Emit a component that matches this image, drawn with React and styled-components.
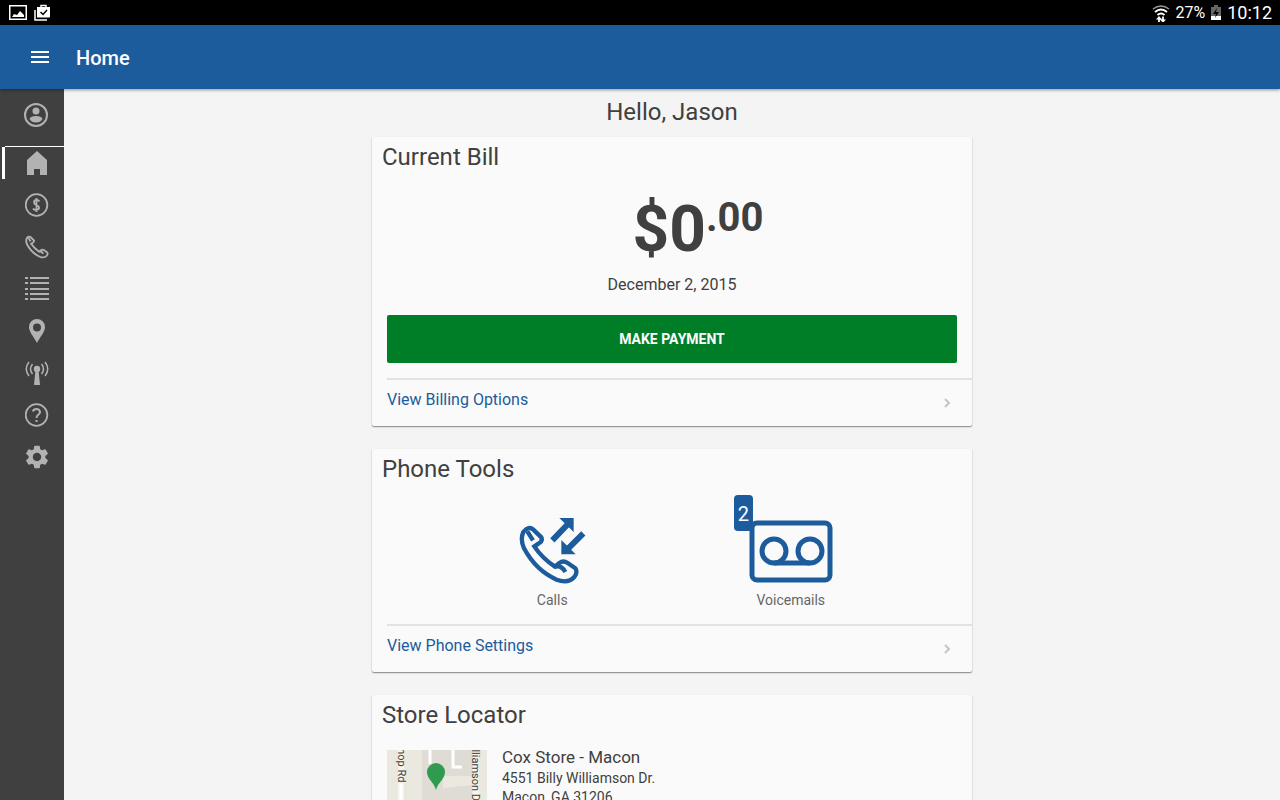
import React from "react";
import styled, { createGlobalStyle } from "styled-components";
import { MdSettings } from "react-icons/md";

const GlobalStyle = createGlobalStyle`
  * {
    box-sizing: border-box;
  }
  body {
    margin: 0;
    font-family: Roboto, sans-serif;
    color: #404040;
    background: #f4f4f4;
  }
`;

const Shell = styled.div`
  display: flex;
  flex-direction: column;
  height: 100vh;
`;

const StatusBar = styled.div`
  display: flex;
  flex: none;
  align-items: center;
  gap: 6px;
  height: 25px;
  padding: 0 8px;
  background: #000;
  color: #fff;
`;

const StatusRight = styled.div`
  display: flex;
  align-items: center;
  gap: 5px;
  margin-left: auto;
  font-size: 16px;
`;

const Clock = styled.time`
  font-size: 18px;
  line-height: 26px;
`;

const Header = styled.header`
  display: flex;
  flex: none;
  align-items: center;
  gap: 24px;
  height: 64px;
  padding: 0 28px;
  background: #1c5c9c;
  color: #fff;
  box-shadow: 0 1px 3px rgba(0, 0, 0, 0.4);
  z-index: 1;
`;

const IconButton = styled.button`
  display: flex;
  padding: 0;
  border: none;
  background: none;
  color: inherit;
  cursor: pointer;
`;

const PageTitle = styled.h1`
  margin: 0;
  font-size: 20px;
  font-weight: 500;
  line-height: 64px;
  padding-top: 2px;
`;

const Body = styled.div`
  display: flex;
  flex: 1;
  min-height: 0;
`;

const Sidebar = styled.nav`
  flex: none;
  width: 64px;
  background: #404040;
  color: #b2b2b2;
`;

const Profile = styled.a`
  display: flex;
  align-items: center;
  height: 58px;
  margin-left: 5px;
  padding: 0 0 5px 19px;
  border-bottom: 1px solid #fff;
  color: inherit;
`;

const NavList = styled.ul`
  display: flex;
  flex-direction: column;
  gap: 10px;
  margin: 0;
  padding: 0 0 0 2px;
  list-style: none;
`;

const NavLink = styled.a`
  display: flex;
  align-items: center;
  height: 32px;
  padding-left: 20px;
  border-left: 3px solid ${(props) => (props.$active ? "#fff" : "transparent")};
  color: inherit;
`;

const NavIcon = styled.span`
  display: flex;
  justify-content: center;
  width: 24px;

  svg {
    flex: none;
  }
`;

const Main = styled.main`
  display: flex;
  flex: 1;
  flex-direction: column;
  align-items: center;
  overflow-y: auto;
  scrollbar-width: none;
`;

const Greeting = styled.h2`
  margin: 0 0 2px;
  font-size: 24px;
  font-weight: 400;
  line-height: 46px;
`;

const Card = styled.section`
  flex: none;
  width: 100%;
  max-width: 600px;
  margin-bottom: 23px;
  border-radius: 2px;
  background: #fafafa;
  box-shadow: 0 1px 1px rgba(0, 0, 0, 0.3), 0 1px 2px rgba(0, 0, 0, 0.2);
`;

const CardTitle = styled.h3`
  margin: 0;
  padding: 0 10px;
  font-size: 24px;
  font-weight: 400;
  line-height: 40px;
`;

const BillBody = styled.div`
  padding: 13px 15px 15px;
  text-align: center;
`;

const Amount = styled.div`
  display: flex;
  justify-content: center;
  padding-left: 52px;
  font-size: 64px;
  font-weight: 700;
  line-height: 80px;
`;

const Cents = styled.span`
  font-size: 40px;
  line-height: 56px;
`;

const DueDate = styled.p`
  margin: 0 0 15px;
  font-size: 16px;
  line-height: 30px;
`;

const PayButton = styled.button`
  width: 100%;
  height: 48px;
  border: none;
  border-radius: 2px;
  background: #007d27;
  color: #fff;
  font: 700 14px Roboto, sans-serif;
  text-transform: uppercase;
  cursor: pointer;
`;

const FooterLink = styled.a`
  display: flex;
  justify-content: space-between;
  height: 48px;
  margin-left: 15px;
  padding-right: 19px;
  border-top: 2px solid #e2e2e2;
  color: #1c5c9c;
  font-size: 16px;
  line-height: 40px;
  text-decoration: none;
`;

const Chevron = styled.svg`
  align-self: center;
`;

const Tools = styled.div`
  display: grid;
  grid-template-columns: 1fr 1fr;
  padding: 24px 62px 14px 61px;
`;

const Tool = styled.a`
  display: flex;
  flex-direction: column;
  align-items: center;
  color: #666;
  font-size: 14px;
  line-height: 20px;
  text-decoration: none;
`;

const ToolIcon = styled.span`
  position: relative;
  display: flex;
  height: 77px;
  color: #1c5c9c;
`;

const Badge = styled.span`
  position: absolute;
  top: -18px;
  left: -15px;
  width: 19px;
  height: 36px;
  border-radius: 4px;
  background: #1c5c9c;
  color: #fff;
  font-size: 20px;
  line-height: 38px;
  text-align: center;
`;

const Store = styled.div`
  display: flex;
  gap: 15px;
  padding: 15px;
`;

const StoreName = styled.p`
  margin: 0 0 5px;
  font-size: 17px;
  line-height: 14px;
`;

const StoreAddress = styled.address`
  font-size: 14px;
  font-style: normal;
  line-height: 19px;
`;

const ImageIcon = () => (
  <svg width="20" height="17" viewBox="0 0 20 17" fill="currentColor">
    <path d="M1 1h18v15H1z M2.500 2.500v12h15v-12z" fillRule="evenodd" />
    <path d="M4 13l2-3 3 1 3-4 4 4v2z" />
  </svg>
);

const ShopIcon = () => (
  <svg width="18" height="18" viewBox="1 1 18 18" fill="none" stroke="#fff">
    <path d="M2 7v10H14" strokeWidth="1.500" />
    <path d="M8 5V2.500h5V5" strokeWidth="1.500" />
    <path d="M4 4h13v9.500q0 1-1 1H4z" fill="#fff" stroke="none" />
    <path d="M7.500 9l2.500 2.500 4-4.500" stroke="#000" strokeWidth="1.500" />
  </svg>
);

const WifiIcon = () => (
  <svg width="18" height="18" viewBox="1 0 18 18" fill="none" stroke="#fff">
    <path d="M2 5q8-6 16 0" stroke="#999" strokeWidth="1.500" />
    <path d="M4 8q6-5 12 0M6.500 11q3.500-3 7 0" strokeWidth="2" />
    <path d="M8 18v-4M12 12.500v4" strokeWidth="1.800" />
    <path d="M5 15.500L8 12l3 3.500zM9 15.500h6L12 19z" fill="#fff" stroke="none" />
  </svg>
);

const BatteryIcon = () => (
  <svg width="12" height="17" viewBox="0 0 12 17">
    <path d="M4 1h4v2h3v9H1V3h3z" fill="#666" />
    <path d="M1 12h10v4H1z" fill="#fff" />
    <path d="M7 4L3 10h3l-1 4 4-6H6z" fill="#000" />
  </svg>
);

const MenuIcon = () => (
  <svg width="24" height="24" viewBox="0 0 24 24" stroke="currentColor" strokeWidth="2">
    <path d="M3 7h18M3 12h18M3 17h18" />
  </svg>
);

const UserIcon = () => (
  <svg width="24" height="24" viewBox="0 0 24 24" fill="currentColor">
    <circle cx="12" cy="12" r="11" fill="none" stroke="currentColor" strokeWidth="2" />
    <circle cx="12" cy="8" r="3.500" />
    <path d="M5.500 16q1-3 6.500-3t6.500 3q-2 3.500-6.500 3.500T5.500 16z" />
  </svg>
);

const HomeIcon = () => (
  <svg width="24" height="24" viewBox="0 0 24 24" fill="currentColor">
    <path d="M12 0L2 9v15h7v-6h6v6h7V9z" />
  </svg>
);

const DollarIcon = () => (
  <svg width="24" height="24" viewBox="0 0 24 24" fill="none" stroke="currentColor">
    <circle cx="11.500" cy="12" r="10.800" strokeWidth="1.800" />
    <path
      d="M14.500 8.500q-1-1.500-3-1.500C8.500 7 8 10.500 11.500 12s3.500 5-.500 5q-2 0-3-1.500M11.500 5v14"
      strokeWidth="1.800"
    />
  </svg>
);

const PhoneShape = () => (
  <>
    <path d="M22 54Q38 34 52 47L76 70Q81 82 67 89L55 97Q78 132 117 158L130 147Q142 138 155 147L178 163Q186 174 175 189Q156 210 122 197Q60 170 24 103Q12 76 22 54Z" />
    <path d="M34 52L51 79M117 158Q136 152 148 174" />
  </>
);

const PhoneIcon = () => (
  <svg
    width="24"
    height="24"
    viewBox="8 30 184 184"
    fill="none"
    stroke="currentColor"
    strokeWidth="14"
  >
    <PhoneShape />
  </svg>
);

const ListIcon = () => (
  <svg width="24" height="24" viewBox="0 0 24 24" stroke="currentColor" strokeWidth="2">
    <path d="M0 1h3M0 6h3M0 12h3M0 17h3M0 22h3M5 1h19M5 6h19M5 12h19M5 17h19M5 22h19" />
  </svg>
);

const PinIcon = () => (
  <svg width="24" height="24" viewBox="0 0 24 24" fill="currentColor">
    <path
      fillRule="evenodd"
      d="M12 0a8 8 0 0 0-8 8c0 5 5 10 8 16 3-6 8-11 8-16a8 8 0 0 0-8-8zm0 4.500a4 4 0 1 1 0 8 4 4 0 0 1 0-8z"
    />
  </svg>
);

const AntennaIcon = () => (
  <svg width="24" height="24" viewBox="0 0 24 24" fill="none" stroke="currentColor">
    <path d="M10.500 9h3L15 24H9z" fill="currentColor" stroke="none" />
    <circle cx="12" cy="8" r="3.200" fill="currentColor" stroke="none" />
    <path
      d="M7.500 3q-4 5 0 10M16.500 3q4 5 0 10M4 1q-5.500 7 0 14M20 1q5.500 7 0 14"
      strokeWidth="1.500"
    />
  </svg>
);

const HelpIcon = () => (
  <svg width="24" height="24" viewBox="0 0 24 24" fill="none" stroke="currentColor">
    <circle cx="11.500" cy="12" r="10.800" strokeWidth="1.800" />
    <path d="M8 8.500Q8.500 6 11.500 6T15 9q0 1.500-1.500 2.500-2 1.300-2 3.500" strokeWidth="2" />
    <path d="M10.500 17h2v2h-2z" fill="currentColor" stroke="none" />
  </svg>
);

const CallsIcon = () => (
  <svg width="72" height="72" viewBox="0 -3 216 216">
    <g fill="none" stroke="currentColor" strokeWidth="13">
      <PhoneShape />
      <path d="M109 79L156 30M202 58L154 106" strokeWidth="18" />
    </g>
    <path d="M130 12H173V54ZM136 78V121H179Z" fill="currentColor" />
  </svg>
);

const VoicemailIcon = () => (
  <svg
    width="84"
    height="72"
    viewBox="0 0 84 72"
    fill="none"
    stroke="currentColor"
    strokeWidth="5"
  >
    <rect x="3" y="10" width="78" height="57" rx="5" />
    <circle cx="25" cy="38" r="12" />
    <circle cx="61" cy="38" r="12" />
    <path d="M25 50h36" />
  </svg>
);

const StoreMap = () => (
  <svg width="100" height="100" viewBox="0 0 100 100" role="img" aria-label="Map of the store">
    <rect width="100" height="100" fill="#ebe8df" />
    <path d="M35 0h50v100H35z" fill="#dfdcd6" />
    <path d="M56 26h29v9l-29 3z" fill="#ebe8df" />
    <path d="M14 0v100M89 0v100" stroke="#f6f4ee" strokeWidth="6" />
    <path d="M14 34v66" stroke="#fff" strokeWidth="3" />
    <path d="M43 0v14M66 0v17h9" fill="none" stroke="#fff" strokeWidth="3" />
    <path d="M49 40C47 32 40 29 40 22a9 9 0 0 1 18 0c0 7-7 10-9 18z" fill="#2e9b4f" />
    <g fontSize="11" fill="#404040">
      <text transform="translate(11 -17) rotate(90)">Bishop Rd</text>
      <text transform="translate(85 -13) rotate(90)">Williamson Dr</text>
    </g>
  </svg>
);

const navItems = [
  { label: "Home", icon: <HomeIcon />, active: true },
  { label: "Billing", icon: <DollarIcon /> },
  { label: "Phone", icon: <PhoneIcon /> },
  { label: "Lists", icon: <ListIcon /> },
  { label: "Stores", icon: <PinIcon /> },
  { label: "Network", icon: <AntennaIcon /> },
  { label: "Help", icon: <HelpIcon /> },
  { label: "Settings", icon: <MdSettings size={28} /> },
];

const CardFooter = ({ children }) => (
  <FooterLink href="#">
    {children}
    <Chevron
      width="12"
      height="12"
      viewBox="0 0 12 12"
      fill="none"
      stroke="#c4c4c4"
      strokeWidth="2"
    >
      <path d="M4 2l4 4-4 4" />
    </Chevron>
  </FooterLink>
);

const App = () => {
  return (
    <>
      <GlobalStyle />
      <Shell>
        <StatusBar>
          <ImageIcon />
          <ShopIcon />
          <StatusRight>
            <WifiIcon />
            <span>27%</span>
            <BatteryIcon />
            <Clock>10:12</Clock>
          </StatusRight>
        </StatusBar>
        <Header>
          <IconButton aria-label="Menu">
            <MenuIcon />
          </IconButton>
          <PageTitle>Home</PageTitle>
        </Header>
        <Body>
          <Sidebar>
            <Profile href="#" aria-label="Profile">
              <UserIcon />
            </Profile>
            <NavList>
              {navItems.map((item) => (
                <li key={item.label}>
                  <NavLink href="#" aria-label={item.label} $active={item.active}>
                    <NavIcon>{item.icon}</NavIcon>
                  </NavLink>
                </li>
              ))}
            </NavList>
          </Sidebar>
          <Main>
            <Greeting>Hello, Jason</Greeting>
            <Card>
              <CardTitle>Current Bill</CardTitle>
              <BillBody>
                <Amount>
                  $0<Cents>.00</Cents>
                </Amount>
                <DueDate>December 2, 2015</DueDate>
                <PayButton>Make Payment</PayButton>
              </BillBody>
              <CardFooter>View Billing Options</CardFooter>
            </Card>
            <Card>
              <CardTitle>Phone Tools</CardTitle>
              <Tools>
                <Tool href="#">
                  <ToolIcon>
                    <CallsIcon />
                  </ToolIcon>
                  Calls
                </Tool>
                <Tool href="#">
                  <ToolIcon>
                    <VoicemailIcon />
                    <Badge>2</Badge>
                  </ToolIcon>
                  Voicemails
                </Tool>
              </Tools>
              <CardFooter>View Phone Settings</CardFooter>
            </Card>
            <Card>
              <CardTitle>Store Locator</CardTitle>
              <Store>
                <StoreMap />
                <div>
                  <StoreName>Cox Store - Macon</StoreName>
                  <StoreAddress>
                    4551 Billy Williamson Dr.
                    <br />
                    Macon, GA 31206
                  </StoreAddress>
                </div>
              </Store>
            </Card>
          </Main>
        </Body>
      </Shell>
    </>
  );
};

export default App;
